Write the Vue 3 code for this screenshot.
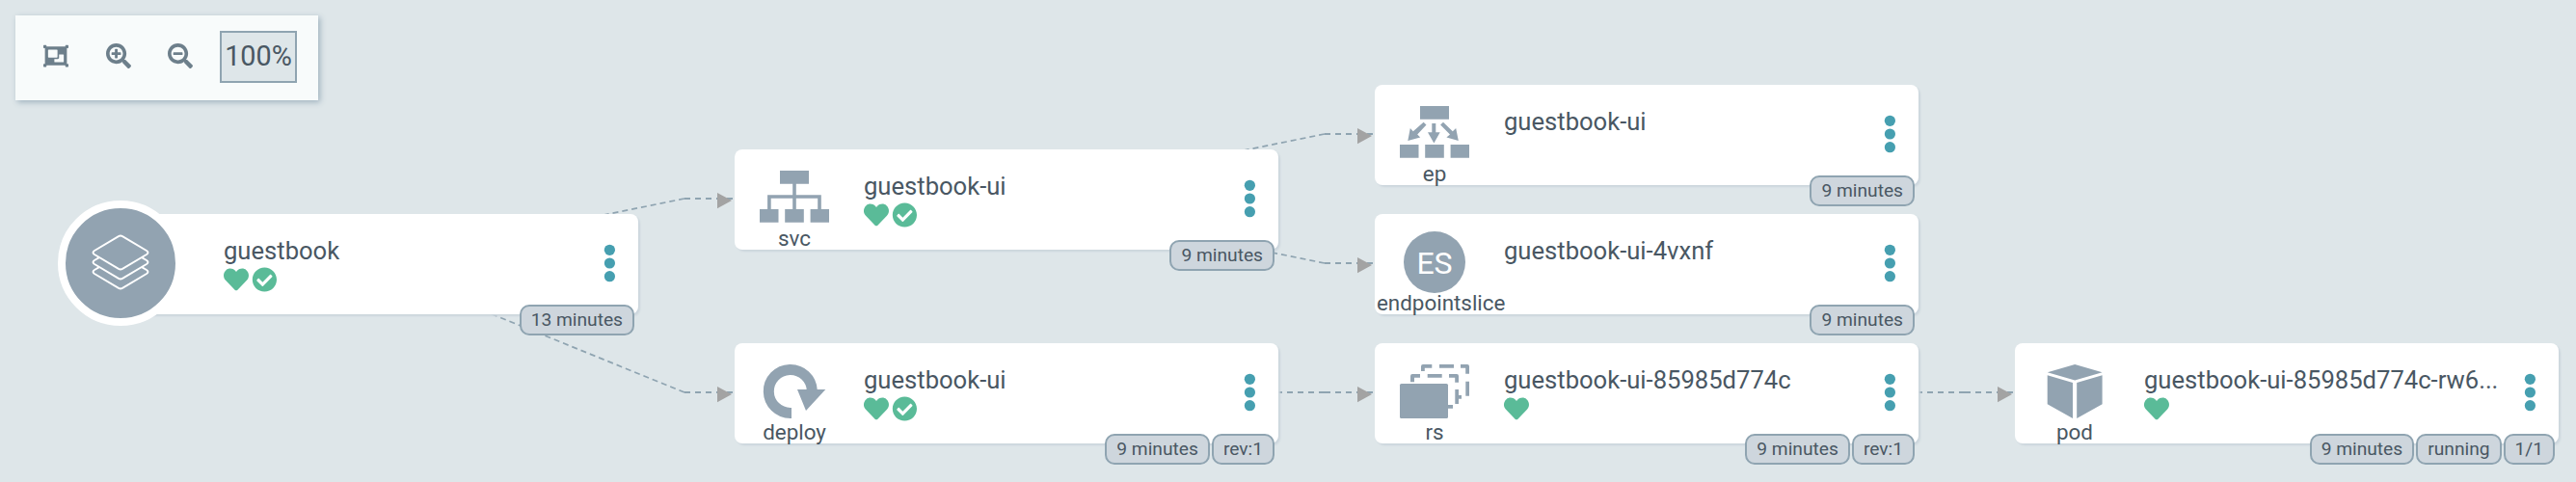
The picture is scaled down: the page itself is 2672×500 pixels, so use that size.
<script setup>
const nodes = [
  { id: 'app', x: 98, y: 222, kind: '', name: 'guestbook', healthy: true, synced: true, tags: ['13 minutes'] },
  { id: 'svc', x: 762, y: 155, kind: 'svc', name: 'guestbook-ui', healthy: true, synced: true, tags: ['9 minutes'] },
  { id: 'deploy', x: 762, y: 356, kind: 'deploy', name: 'guestbook-ui', healthy: true, synced: true, tags: ['9 minutes', 'rev:1'] },
  { id: 'ep', x: 1426, y: 88, kind: 'ep', name: 'guestbook-ui', tags: ['9 minutes'] },
  { id: 'es', x: 1426, y: 222, kind: 'endpointslice', name: 'guestbook-ui-4vxnf', tags: ['9 minutes'] },
  { id: 'rs', x: 1426, y: 356, kind: 'rs', name: 'guestbook-ui-85985d774c', healthy: true, tags: ['9 minutes', 'rev:1'] },
  { id: 'pod', x: 2090, y: 356, kind: 'pod', name: 'guestbook-ui-85985d774c-rw6...', healthy: true, tags: ['9 minutes', 'running', '1/1'] },
]

// Each edge leaves a node's centre, bends 52px before its target and runs in flat.
const edges = [
  { x: 380, y: 273, to: 206 },
  { x: 380, y: 273, to: 407 },
  { x: 1044, y: 206, to: 139 },
  { x: 1044, y: 206, to: 273 },
  { x: 1044, y: 407, to: 407 },
  { x: 1708, y: 407, to: 407 },
]
</script>

<template>
  <main class="tree">
    <svg class="edges" width="2672" height="500">
      <g v-for="(e, i) in edges" :key="i">
        <path
          class="line"
          :class="{ slanted: e.y !== e.to }"
          :d="`M${e.x + 330} ${e.to}L${e.x} ${e.y}`"
        />
        <path class="line" :d="`M${e.x + 330} ${e.to}h50`" />
        <path class="arrow" :d="`M${e.x + 364} ${e.to - 6}l15 8l-15 8.3z`" />
      </g>
    </svg>

    <section
      v-for="n in nodes"
      :key="n.id"
      class="node"
      :style="{ left: n.x + 'px', top: n.y + 'px' }"
    >
      <div v-if="n.id === 'app'" class="app-badge">
        <svg width="62" height="60" viewBox="0 0 62 60">
          <g fill="none" stroke="#fff" stroke-width="1.9" stroke-linejoin="round" stroke-linecap="round">
            <path d="M29 2.1Q31 1 33 2.1L58 17Q61 19 58 21L33 35.9Q31 37 29 35.9L4 21Q1 19 4 17Z" />
            <path d="M8.5 24.4L4 27Q1 29 4 31L29 45.9Q31 47 33 45.9L58 31Q61 29 58 27L53.5 24.4" />
            <path d="M8.5 34.4L4 37Q1 39 4 41L29 55.9Q31 57 33 55.9L58 41Q61 39 58 37L53.5 34.4" />
          </g>
        </svg>
      </div>

      <div class="kind">
        <div class="kind-icon">
          <svg v-if="n.id === 'svc'" width="72" height="56" viewBox="0 0 72 56">
            <path d="M21 0h30v13.7H21zM0 40h19.5v13.8H0zM26.2 40h19.6v13.8H26.2zM52.6 40H72v13.8H52.6z" />
            <path d="M36 13v28M9.9 41V27H62v14" fill="none" stroke="#92a3b1" stroke-width="3.6" />
          </svg>
          <svg v-else-if="n.id === 'ep'" width="72" height="56" viewBox="0 0 72 56">
            <path d="M21 0h30v13.7H21zM0 40h19.5v13.8H0zM26.2 40h19.6v13.8H26.2zM52.6 40H72v13.8H52.6z" />
            <path d="M33.3 18h4v9.2h4.4L35.4 38.4L29 27.2h4.3z" />
            <path d="M24.6 16.8l2.9 2.8L18.2 29.4l3 3.2L8.3 36l2.5-13l3 3.3z" />
            <path d="M45 16.8l-2.9 2.8L52 29.4l-3.6 3.2L60.8 36L58.2 23l-3.4 3.3z" />
          </svg>
          <span v-else-if="n.id === 'es'" class="initials">ES</span>
          <svg v-else-if="n.id === 'deploy'" width="72" height="56" viewBox="0 0 72 56">
            <path d="M33 50.4H32A22.5 22.5 0 1 1 54.3 27" fill="none" stroke="#92a3b1" stroke-width="11" />
            <path d="M39 26h29.3L48 48z" />
          </svg>
          <svg v-else-if="n.id === 'rs'" width="72" height="56" viewBox="0 0 72 56">
            <rect y="20" width="50" height="36" rx="1.6" />
            <path d="M11 18.3V12q0-2 2-2h8v3.8h-6v4.5zM28.7 10h15v3.8h-15zM51 10h8q2 0 2 2v6.7h-3.8v-4.9H51zM57.3 26H61v6h3v3.7h-3V41h-3.7zM50 42h5v3.7h-5z" />
            <path d="M22 7V2q0-2 2-2h9.3v3.8h-7.5V7zM41 0h15v3.8H41zM63 0h7q2 0 2 2v7.7h-3.8V3.8H63zM68.3 17.8H72v14.9h-3.7z" />
          </svg>
          <svg v-else-if="n.id === 'pod'" width="72" height="56" viewBox="0 0 72 56">
            <path d="M36.2 0L64.6 8.2L36.2 16.4L7.8 8.2zM7.7 11.3L34 19v37L7.7 41.3zM38.2 19l26.4-7.7v30L38.2 56z" />
          </svg>
        </div>
        <div class="kind-label">{{ n.kind }}</div>
      </div>

      <div class="content">
        <div class="title">{{ n.name }}</div>
        <div class="status">
          <svg v-if="n.healthy" width="26" height="26" viewBox="0 0 512 512">
            <path d="M462.3 62.6C407.5 15.9 326 24.3 275.7 76.2L256 96.5l-19.7-20.3C186.1 24.3 104.5 15.9 49.7 62.6c-62.8 53.6-66.1 149.8-9.9 207.9l193.5 199.8c12.5 12.9 32.8 12.9 45.3 0l193.5-199.8c56.3-58.1 53-154.3-9.8-207.9z" />
          </svg>
          <svg v-if="n.synced" width="26" height="26" viewBox="-8 0 512 512">
            <path d="M504 256c0 136.967-111.033 248-248 248S8 392.967 8 256 119.033 8 256 8s248 111.033 248 248zM227.314 387.314l184-184c6.248-6.248 6.248-16.379 0-22.627l-22.627-22.627c-6.248-6.248-16.379-6.249-22.628 0L216 308.118l-70.059-70.059c-6.248-6.248-16.379-6.248-22.628 0l-22.627 22.627c-6.248 6.248-6.248 16.379 0 22.627l104 104c6.249 6.249 16.379 6.249 22.628.001z" />
          </svg>
        </div>
      </div>

      <svg class="menu" width="12" height="40" viewBox="0 0 12 40">
        <circle cx="6.4" cy="6.3" r="5.6" /><circle cx="6.4" cy="20" r="5.6" /><circle cx="6.4" cy="33.7" r="5.6" />
      </svg>

      <div class="tags">
        <span v-for="t in n.tags" :key="t" class="tag">{{ t }}</span>
      </div>
    </section>

    <nav class="toolbar">
      <svg width="26" height="26" viewBox="0 0 512 512">
        <path d="M480 128V96h20c6.627 0 12-5.373 12-12V44c0-6.627-5.373-12-12-12h-40c-6.627 0-12 5.373-12 12v20H64V44c0-6.627-5.373-12-12-12H12C5.373 32 0 37.373 0 44v40c0 6.627 5.373 12 12 12h20v320H12c-6.627 0-12 5.373-12 12v40c0 6.627 5.373 12 12 12h40c6.627 0 12-5.373 12-12v-20h384v20c0 6.627 5.373 12 12 12h40c6.627 0 12-5.373 12-12v-40c0-6.627-5.373-12-12-12h-20V128zM96 276V140c0-6.627 5.373-12 12-12h168c6.627 0 12 5.373 12 12v136c0 6.627-5.373 12-12 12H108c-6.627 0-12-5.373-12-12zm320 96c0 6.627-5.373 12-12 12H236c-6.627 0-12-5.373-12-12v-52h72c13.255 0 24-10.745 24-24v-72h84c6.627 0 12 5.373 12 12v136z" />
      </svg>
      <svg width="26" height="26" viewBox="0 0 512 512">
        <path d="M304 192v32c0 6.6-5.4 12-12 12h-56v56c0 6.6-5.4 12-12 12h-32c-6.6 0-12-5.4-12-12v-56h-56c-6.6 0-12-5.4-12-12v-32c0-6.6 5.4-12 12-12h56v-56c0-6.6 5.4-12 12-12h32c6.6 0 12 5.4 12 12v56h56c6.6 0 12 5.4 12 12zm201 284.7L476.7 505c-9.4 9.4-24.6 9.4-33.9 0L343 405.3c-4.5-4.5-7-10.6-7-17V372c-35.3 27.6-79.7 44-128 44C93.1 416 0 322.9 0 208S93.1 0 208 0s208 93.1 208 208c0 48.3-16.4 92.7-44 128h16.3c6.4 0 12.5 2.5 17 7l99.7 99.7c9.3 9.4 9.3 24.6 0 34zM344 208c0-75.2-60.8-136-136-136S72 132.8 72 208s60.8 136 136 136 136-60.8 136-136z" />
      </svg>
      <svg width="26" height="26" viewBox="0 0 512 512">
        <path d="M304 192v32c0 6.6-5.4 12-12 12H124c-6.6 0-12-5.4-12-12v-32c0-6.6 5.4-12 12-12h168c6.6 0 12 5.4 12 12zm201 284.7L476.7 505c-9.4 9.4-24.6 9.4-33.9 0L343 405.3c-4.5-4.5-7-10.6-7-17V372c-35.3 27.6-79.7 44-128 44C93.1 416 0 322.9 0 208S93.1 0 208 0s208 93.1 208 208c0 48.3-16.4 92.7-44 128h16.3c6.4 0 12.5 2.5 17 7l99.7 99.7c9.3 9.4 9.3 24.6 0 34zM344 208c0-75.2-60.8-136-136-136S72 132.8 72 208s60.8 136 136 136 136-60.8 136-136z" />
      </svg>
      <div class="zoom-value">100%</div>
    </nav>
  </main>
</template>

<style>
body {
  background: #dee6e9;
}
</style>

<style scoped>
.tree {
  position: relative;
  width: 2672px;
  height: 500px;
  overflow: hidden;
  background: #dee6e9;
  color: #495763;
  font-family: Roboto, "Liberation Sans", sans-serif;
}
svg {
  display: block;
  flex: none;
  overflow: visible;
}
.edges {
  position: absolute;
  inset: 0;
}
.line {
  fill: none;
  stroke: #8fa4b1;
  stroke-width: 2;
  stroke-dasharray: 6 5;
}
.slanted {
  stroke-width: 1.7;
  stroke-dasharray: 6 4;
}
.arrow {
  fill: #a3a3a3;
}
.node {
  position: absolute;
  display: flex;
  box-sizing: border-box;
  width: 564px;
  height: 104px;
  padding-left: 2px;
  border-radius: 8px;
  background: #fff;
  box-shadow: 2px 2px 2px #ccd6dd;
}
.app-badge {
  position: absolute;
  left: -38px;
  top: -14px;
  display: flex;
  align-items: center;
  justify-content: center;
  box-sizing: border-box;
  width: 130px;
  height: 130px;
  border: 8px solid #fff;
  border-radius: 50%;
  background: #92a3b1;
}
.kind {
  flex: none;
  width: 120px;
}
.kind-icon {
  display: flex;
  justify-content: center;
  align-items: flex-start;
  height: 79px;
}
.kind-icon svg {
  margin-top: 22px;
  fill: #92a3b1;
}
.initials {
  width: 64px;
  height: 64px;
  margin-top: 18px;
  border-radius: 50%;
  background: #92a3b1;
  color: #fff;
  font-size: 32px;
  line-height: 66px;
  text-align: center;
}
.kind-label {
  font-size: 22.4px;
  line-height: 26px;
  text-align: center;
  white-space: nowrap;
}
.content {
  flex: none;
  width: 374px;
  margin-left: 12px;
}
.title {
  margin-top: 22px;
  font-size: 25.6px;
  line-height: 32px;
  white-space: nowrap;
}
.status {
  display: flex;
  gap: 3px;
  margin-top: 0.6px;
  fill: #5abb98;
}
.menu {
  margin: 31px 0 0 20px;
  fill: #469fb0;
}
.tags {
  position: absolute;
  right: 4px;
  bottom: -22px;
  display: flex;
  gap: 2px;
}
.tag {
  box-sizing: border-box;
  height: 32px;
  padding: 0 10px;
  border: 2px solid #8fa4b1;
  border-radius: 10px;
  background: #ced6dd;
  font-size: 19.2px;
  line-height: 28px;
  white-space: nowrap;
}
.toolbar {
  position: absolute;
  left: 16px;
  top: 16px;
  display: flex;
  align-items: flex-start;
  gap: 38.5px;
  box-sizing: border-box;
  width: 314px;
  height: 88px;
  padding: 16px 22px 0 29px;
  background: #f8fbfb;
  box-shadow: 2px 2px 6px #9fb2be;
  fill: #6d7f8b;
}
.toolbar svg {
  margin-top: 13px;
}
.zoom-value {
  flex: none;
  box-sizing: border-box;
  width: 80px;
  height: 54px;
  margin-left: -10.5px;
  border: 2px solid #8fa4b1;
  background: #dee6e9;
  font-size: 28.8px;
  line-height: 49px;
  text-align: center;
}
</style>
